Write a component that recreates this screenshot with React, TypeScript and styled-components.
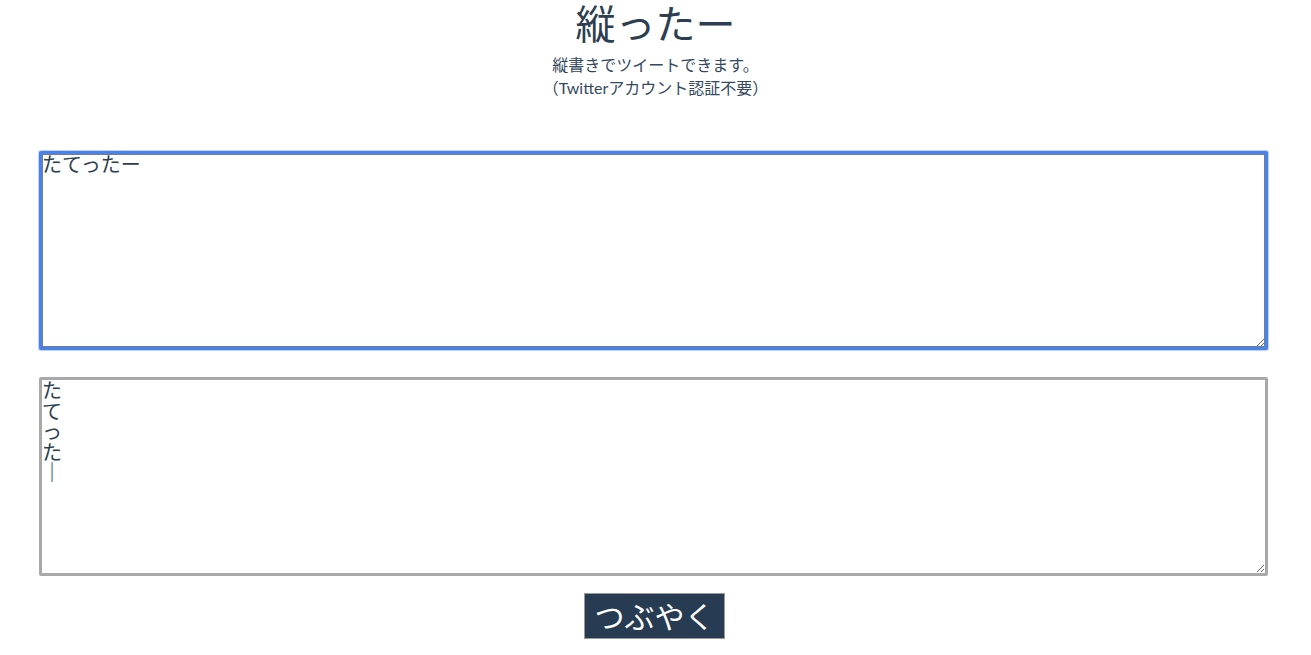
import React from "react";
import styled, { createGlobalStyle } from "styled-components";

const Global = createGlobalStyle`
  html, body { margin: 0; padding: 0; background: #fff; }
  body { margin: 0 8px; }
`;

const Page = styled.div`
  font-family: Lato, "Noto Sans CJK JP", sans-serif;
  color: #2c3e50;
  text-align: center;
  -webkit-font-smoothing: antialiased;
`;

const Title = styled.h1`
  margin: 0;
  font-size: 40px;
  line-height: 48px;
  font-weight: 400;
`;

const Lead = styled.p`
  margin: 5px 0 0;
  font-size: 16px;
  line-height: 23px;
  color: #34495e;
`;

const Form = styled.div`
  margin-top: 52px;
  display: flex;
  flex-direction: column;
  align-items: center;
`;

const Area = styled.textarea<{ $focused?: boolean }>`
  box-sizing: border-box;
  width: 1229px;
  height: 199px;
  margin: 0 4px 0 0;
  padding: 0;
  font-family: Lato, "Noto Sans CJK JP", sans-serif;
  font-size: 20px;
  line-height: 20.5px;
  color: #2c3e50;
  background: #fff;
  border: 3px solid ${(p) => (p.$focused ? "#4a82ea" : "#a9a9a9")};
  box-shadow: ${(p) =>
    p.$focused
      ? "0 0 0 1px rgba(110,155,240,0.45), inset 0 0 0 1px #6f7f9a"
      : "none"};
  outline: none;
  resize: vertical;
  border-radius: 2px;
  & + & {
    margin-top: 27px;
  }
`;

const Button = styled.button`
  margin: 17px 2px 0 0;
  width: 141px;
  height: 46px;
  padding: 0;
  background: #273c52;
  color: #fff;
  border: 1px solid #9a9a9a;
  font-family: Lato, "Noto Sans CJK JP", sans-serif;
  font-size: 30px;
  line-height: 44px;
  cursor: pointer;
`;

export default function App() {
  return (
    <Page>
      <Global />
      <Title>縦ったー</Title>
      <Lead>
        縦書きでツイートできます。
        <br />
        （Twitterアカウント認証不要）
      </Lead>
      <Form>
        <Area $focused spellCheck={false} defaultValue="たてったー" />
        <Area spellCheck={false} defaultValue={"た\nて\nっ\nた\n｜"} />
        <Button>つぶやく</Button>
      </Form>
    </Page>
  );
}
